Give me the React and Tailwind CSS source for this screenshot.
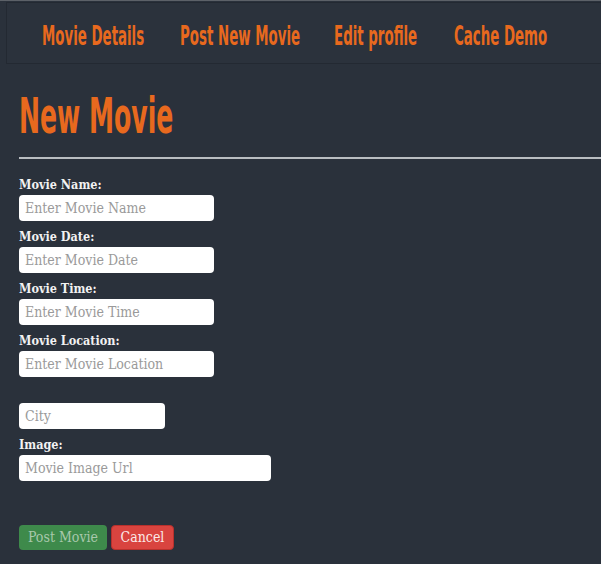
import React from "react";

const head = "font-['DejaVu_Sans',sans-serif] font-stretch-condensed font-bold";
const serif = "font-['DejaVu_Serif',serif] font-stretch-condensed";

function Field({ label, placeholder, width = "w-[195px]" }) {
  return (
    <div className="flex flex-col">
      <label className={`${serif} text-[12.5px] leading-[20px] font-bold text-[#f2f2f2] h-[20px]`}>{label}</label>
      <input
        placeholder={placeholder}
        className={`${serif} ${width} h-[26px] bg-white rounded-[4px] px-[6px] text-[14px] text-[#333] placeholder:text-[#9a9a9a] outline-none`}
      />
    </div>
  );
}

const links = [
  ["Movie Details", "w-[102px]"],
  ["Post New Movie", "w-[118px]"],
  ["Edit profile", "w-[84px]"],
  ["Cache Demo", "w-[93px]"],
];

export default function App() {
  return (
    <div className="min-h-[564px] w-[601px] bg-[#2a313b] overflow-hidden border-t border-[#5c6168]">
      <div className="pt-[1px] pl-[6px]">
        <nav className="h-[62px] border border-[#232932] border-r-0 bg-[#2b323c] flex items-center pl-[35px] pt-[5px] gap-[36px]">
          {links.map(([t, w]) => (
            <a key={t} className={`${w} block whitespace-nowrap`}>
              <span className={`${head} inline-block origin-left scale-x-[0.55] text-[27px] leading-[30px] text-[#e8691e]`}>{t}</span>
            </a>
          ))}
        </nav>
      </div>
      <div className="pl-[19px]">
        <h1 className="mt-[28px] h-[50px] whitespace-nowrap">
          <span className={`${head} inline-block origin-left scale-x-[0.57] text-[49px] leading-[50px] text-[#e8691e]`}>New Movie</span>
        </h1>
        <div className="h-[2px] bg-[#b9bdc1] mt-[15px]" />
        <div className="mt-[16px] flex flex-col gap-[6px]">
          <Field label="Movie Name:" placeholder="Enter Movie Name" />
          <Field label="Movie Date:" placeholder="Enter Movie Date" />
          <Field label="Movie Time:" placeholder="Enter Movie Time" />
          <Field label="Movie Location:" placeholder="Enter Movie Location" />
          <Field label="" placeholder="City" width="w-[146px]" />
          <Field label="Image:" placeholder="Movie Image Url" width="w-[252px]" />
        </div>
        <div className="mt-[44px] flex gap-[4px]">
          <button className={`${serif} h-[25px] w-[88px] rounded-[4px] bg-[#3e8a4b] text-[#a8c8ac] text-[14px]`}>Post Movie</button>
          <button className={`${serif} h-[25px] w-[63px] rounded-[4px] bg-[#d9443f] border border-[#b8302c] text-[#fbe9e8] text-[14px]`}>Cancel</button>
        </div>
      </div>
    </div>
  );
}
